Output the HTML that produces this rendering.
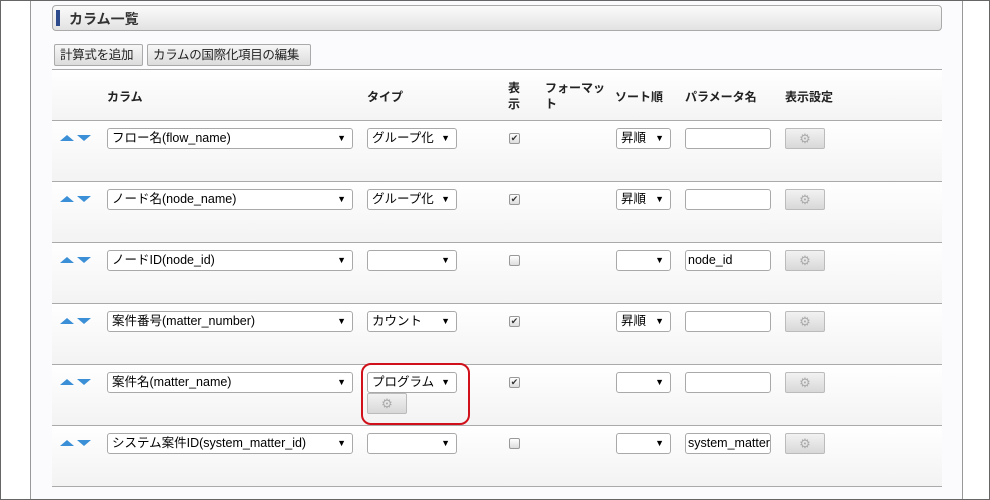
<!DOCTYPE html>
<html><head><meta charset="utf-8"><style>
*{box-sizing:border-box;margin:0;padding:0}
body{width:990px;height:500px;position:relative;background:#fff;font-family:"Liberation Sans","Noto Sans CJK JP",sans-serif;font-size:13px;color:#000;overflow:hidden}
.a{position:absolute}
.sel{position:absolute;height:21px;background:#fff;border:1px solid #a9a9a9;border-radius:3px;font-size:12.5px;line-height:19px;padding-left:4px;white-space:nowrap;overflow:hidden}
.sel:after{content:"▼";position:absolute;right:6px;top:0;font-size:9px}
.inp{position:absolute;height:21px;background:#fff;border:1px solid #a9a9a9;border-radius:3px;line-height:19px;padding-left:2px;overflow:hidden;white-space:nowrap;font-size:12.5px}
.gear{position:absolute;width:40px;height:21px;border:1px solid #bbb;border-radius:2px;background:linear-gradient(#f2f2f2,#d8d8d8);text-align:center;line-height:19px;color:#aaa;font-size:13px}
.cb{position:absolute;width:11px;height:11px;border:1px solid #999;border-radius:2px;background:linear-gradient(#fff,#ddd);font-size:9px;line-height:9px;text-align:center;color:#333}
.row{position:absolute;left:52px;width:890px;height:61px;border-bottom:1px solid #aaa;background:linear-gradient(#fff,#f3f3f3)}
.th{position:absolute;font-size:12px;font-weight:bold;color:#222;white-space:nowrap}
.btn{position:absolute;top:44px;height:22px;border:1px solid #aaa;border-radius:2px;background:linear-gradient(#f7f7f7,#dcdcdc);font-size:12.5px;line-height:20px;padding:0 5px;color:#222;white-space:nowrap;overflow:hidden;letter-spacing:-0.3px}
.up{position:absolute;width:0;height:0;border-left:7px solid transparent;border-right:7px solid transparent;border-bottom:6px solid #3a8fd6}
.dn{position:absolute;width:0;height:0;border-left:7px solid transparent;border-right:7px solid transparent;border-top:6px solid #3a8fd6}
</style></head><body>
<div class="a" style="left:0;top:0;width:990px;height:500px;border:1px solid #666"></div>
<div class="a" style="left:30px;top:1px;width:933px;height:498px;background:#fbfbfe;border-left:1px solid #999;border-right:1px solid #999"></div>
<div class="a" style="left:52px;top:5px;width:890px;height:26px;border:1px solid #aaa;border-radius:4px;background:linear-gradient(#fbfbfb,#e2e2e2)"></div>
<div class="a" style="left:56px;top:10px;width:4px;height:16px;background:#2c4a8c"></div>
<div class="a" style="left:69px;top:9px;font-size:14px;font-weight:bold;color:#333">カラム一覧</div>
<div class="btn" style="left:54px;width:89px">計算式を追加</div>
<div class="btn" style="left:147px;width:164px">カラムの国際化項目の編集</div>
<div class="a" style="left:52px;top:69px;width:890px;height:52px;border-top:1px solid #aaa;border-bottom:1px solid #aaa;background:linear-gradient(#fff,#f4f4f4)"></div>
<div class="th" style="left:107px;top:88px">カラム</div>
<div class="th" style="left:367px;top:88px">タイプ</div>
<div class="th" style="left:508px;top:80px;line-height:16px">表<br>示</div>
<div class="th" style="left:545px;top:80px;line-height:16px">フォーマッ<br>ト</div>
<div class="th" style="left:615px;top:88px">ソート順</div>
<div class="th" style="left:685px;top:88px">パラメータ名</div>
<div class="th" style="left:785px;top:88px">表示設定</div>

<div class="row" style="top:121px"></div>
<div class="row" style="top:182px"></div>
<div class="row" style="top:243px"></div>
<div class="row" style="top:304px"></div>
<div class="row" style="top:365px"></div>
<div class="row" style="top:426px"></div>

<div class="up" style="left:60px;top:135px"></div><div class="dn" style="left:77px;top:135px"></div>
<div class="sel" style="left:107px;top:128px;width:246px">フロー名(flow_name)</div>
<div class="sel" style="left:367px;top:128px;width:90px">グループ化</div>
<div class="cb" style="left:509px;top:133px">✔</div>
<div class="sel" style="left:616px;top:128px;width:55px">昇順</div>
<div class="inp" style="left:685px;top:128px;width:86px"></div>
<div class="gear" style="left:785px;top:128px">⚙</div>

<div class="up" style="left:60px;top:196px"></div><div class="dn" style="left:77px;top:196px"></div>
<div class="sel" style="left:107px;top:189px;width:246px">ノード名(node_name)</div>
<div class="sel" style="left:367px;top:189px;width:90px">グループ化</div>
<div class="cb" style="left:509px;top:194px">✔</div>
<div class="sel" style="left:616px;top:189px;width:55px">昇順</div>
<div class="inp" style="left:685px;top:189px;width:86px"></div>
<div class="gear" style="left:785px;top:189px">⚙</div>

<div class="up" style="left:60px;top:257px"></div><div class="dn" style="left:77px;top:257px"></div>
<div class="sel" style="left:107px;top:250px;width:246px">ノードID(node_id)</div>
<div class="sel" style="left:367px;top:250px;width:90px"></div>
<div class="cb" style="left:509px;top:255px"></div>
<div class="sel" style="left:616px;top:250px;width:55px"></div>
<div class="inp" style="left:685px;top:250px;width:86px">node_id</div>
<div class="gear" style="left:785px;top:250px">⚙</div>

<div class="up" style="left:60px;top:318px"></div><div class="dn" style="left:77px;top:318px"></div>
<div class="sel" style="left:107px;top:311px;width:246px">案件番号(matter_number)</div>
<div class="sel" style="left:367px;top:311px;width:90px">カウント</div>
<div class="cb" style="left:509px;top:316px">✔</div>
<div class="sel" style="left:616px;top:311px;width:55px">昇順</div>
<div class="inp" style="left:685px;top:311px;width:86px"></div>
<div class="gear" style="left:785px;top:311px">⚙</div>

<div class="up" style="left:60px;top:379px"></div><div class="dn" style="left:77px;top:379px"></div>
<div class="sel" style="left:107px;top:372px;width:246px">案件名(matter_name)</div>
<div class="sel" style="left:367px;top:372px;width:90px">プログラム</div>
<div class="gear" style="left:367px;top:393px">⚙</div>
<div class="a" style="left:361px;top:363px;width:109px;height:62px;border:2px solid #d0111b;border-radius:10px"></div>
<div class="cb" style="left:509px;top:377px">✔</div>
<div class="sel" style="left:616px;top:372px;width:55px"></div>
<div class="inp" style="left:685px;top:372px;width:86px"></div>
<div class="gear" style="left:785px;top:372px">⚙</div>

<div class="up" style="left:60px;top:440px"></div><div class="dn" style="left:77px;top:440px"></div>
<div class="sel" style="left:107px;top:433px;width:246px">システム案件ID(system_matter_id)</div>
<div class="sel" style="left:367px;top:433px;width:90px"></div>
<div class="cb" style="left:509px;top:438px"></div>
<div class="sel" style="left:616px;top:433px;width:55px"></div>
<div class="inp" style="left:685px;top:433px;width:86px">system_matter_id</div>
<div class="gear" style="left:785px;top:433px">⚙</div>
</body></html>
